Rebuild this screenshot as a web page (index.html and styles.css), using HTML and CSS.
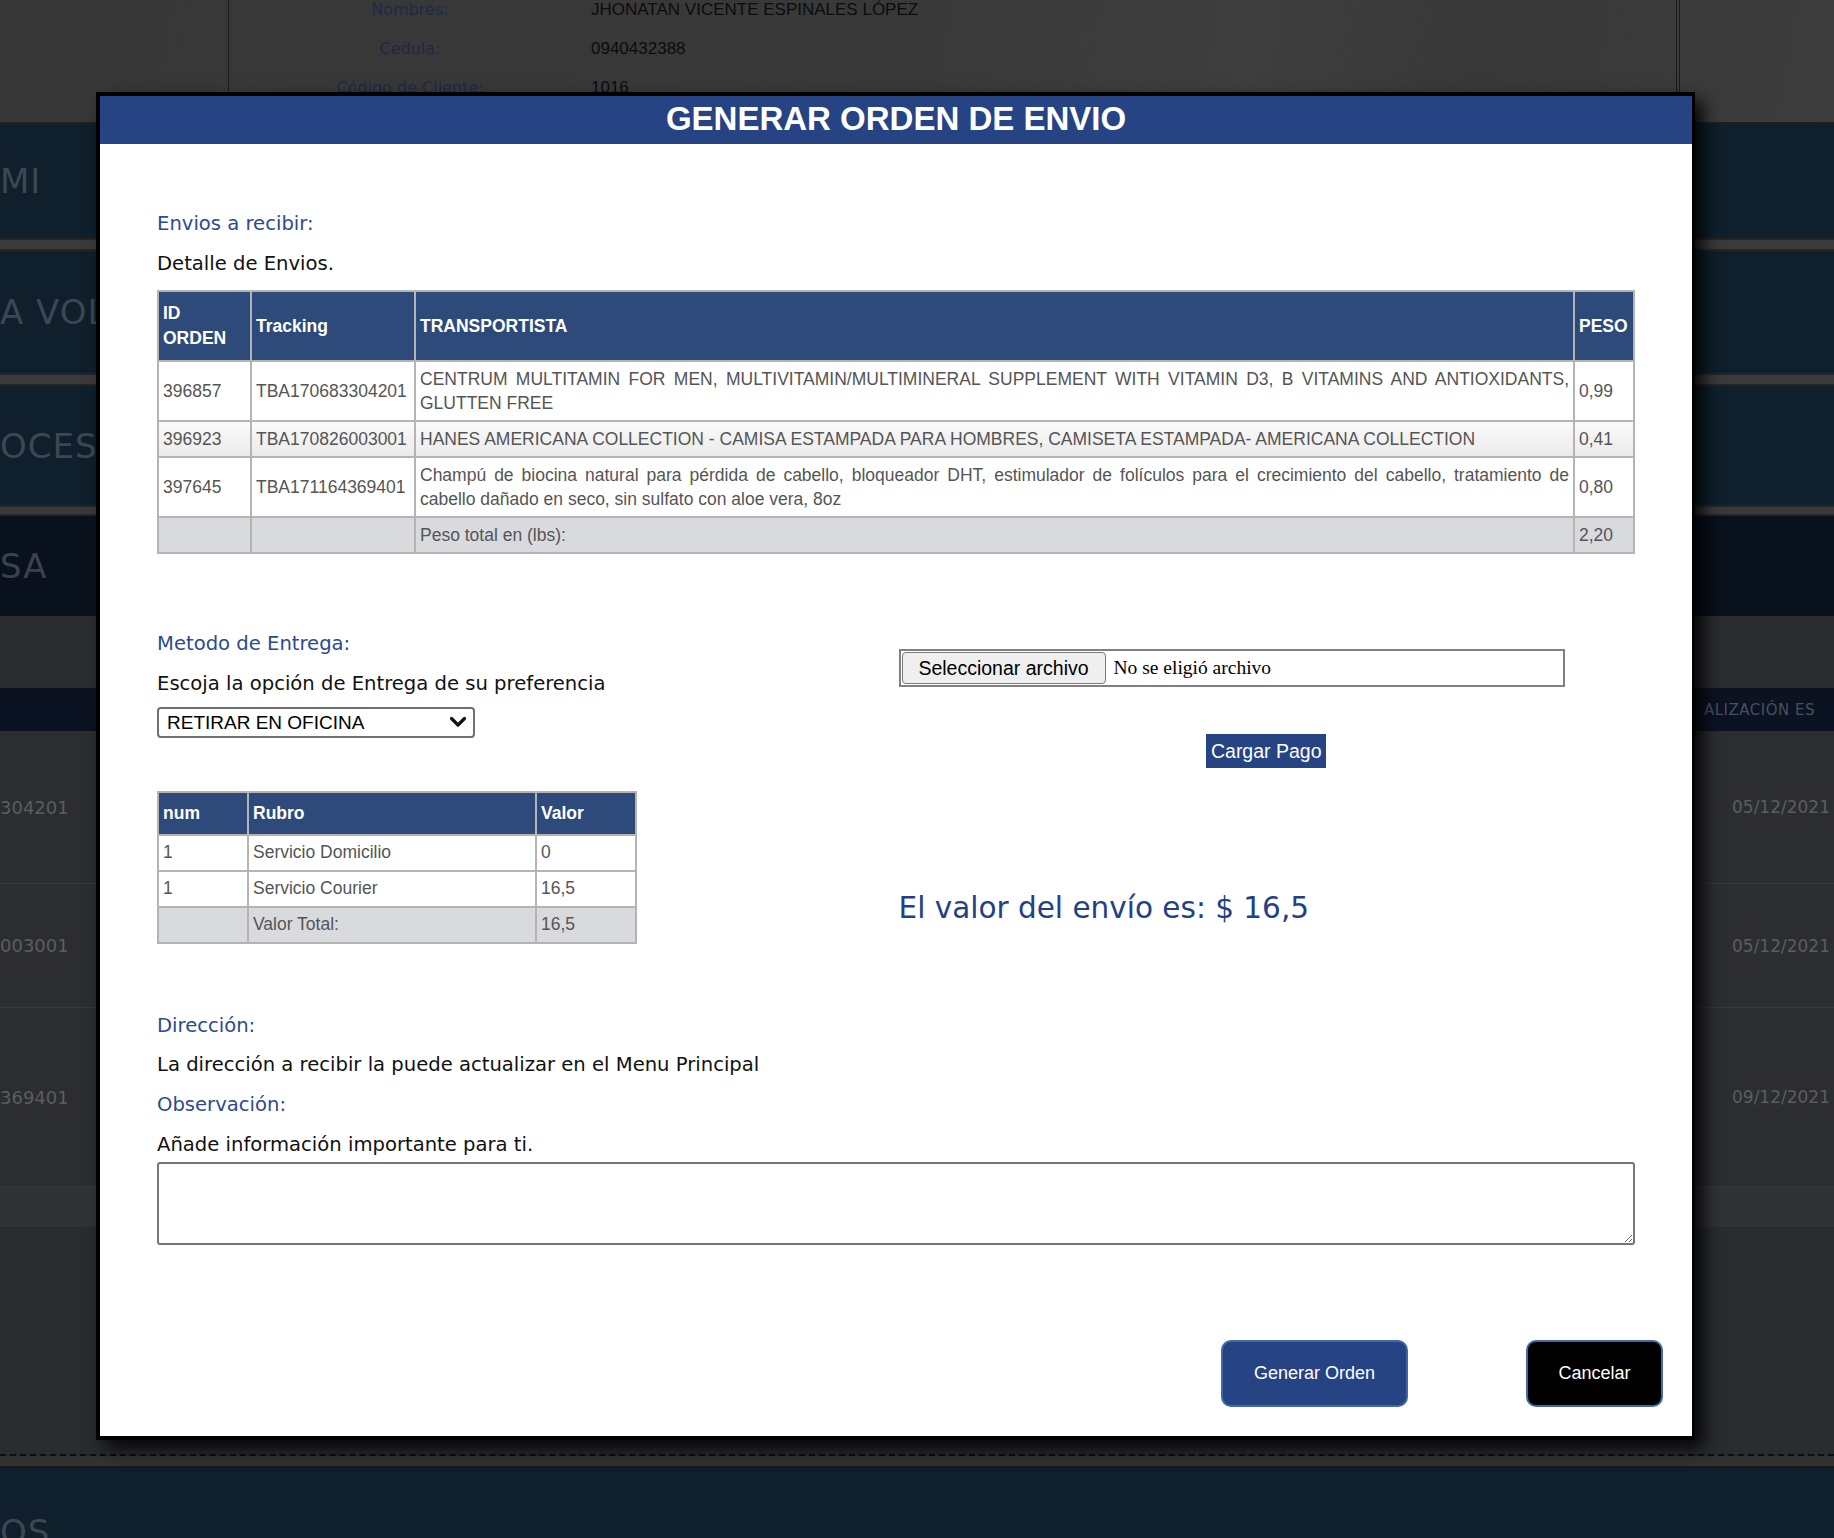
FILE: index.html
```html
<!DOCTYPE html>
<html lang="es">
<head>
<meta charset="utf-8">
<title>Generar Orden de Envio</title>
<link rel="stylesheet" href="styles.css">
</head>
<body>
<div class="page">
  <section class="profile">
    <div class="profile-box">
      <div class="profile-rows">
        <div class="profile-row"><span class="p-label">Nombres:</span><span class="p-value">JHONATAN VICENTE ESPINALES LÓPEZ</span></div>
        <div class="profile-row"><span class="p-label">Cedula:</span><span class="p-value">0940432388</span></div>
        <div class="profile-row"><span class="p-label">Código de Cliente:</span><span class="p-value">1016</span></div>
      </div>
    </div>
  </section>
  <div class="band b1"><span class="band-text">MI</span></div>
  <div class="band-sep"></div>
  <div class="band b2"><span class="band-text">A VOLA</span></div>
  <div class="band-sep"></div>
  <div class="band b3"><span class="band-text">OCESO</span></div>
  <div class="band-sep thin"></div>
  <div class="band b4"><span class="band-text t4">SA</span></div>
  <div class="bg-spacer"></div>
  <div class="bg-thead"><span class="bg-th">ALIZACIÓN ES</span></div>
  <div class="bg-row r1"><span class="bg-cell">304201</span><span class="bg-date">05/12/2021</span></div>
  <div class="bg-row r2"><span class="bg-cell">003001</span><span class="bg-date">05/12/2021</span></div>
  <div class="bg-row r3"><span class="bg-cell">369401</span><span class="bg-date">09/12/2021</span></div>
  <div class="bg-foot"></div>
  <div class="bg-fill"></div>
  <div class="bg-gap"></div>
  <div class="bg-footer"><span class="band-text">OS</span></div>
</div>

<div class="modal">
  <div class="modal-head">GENERAR ORDEN DE ENVIO</div>
  <div class="modal-body">
    <p class="label">Envios a recibir:</p>
    <p class="text gap16">Detalle de Envios.</p>
    <table class="grid ship">
      <colgroup><col class="c-id"><col class="c-track"><col><col class="c-peso"></colgroup>
      <thead>
        <tr><th>ID ORDEN</th><th>Tracking</th><th>TRANSPORTISTA</th><th>PESO</th></tr>
      </thead>
      <tbody>
        <tr><td>396857</td><td>TBA170683304201</td><td class="desc">CENTRUM MULTITAMIN FOR MEN, MULTIVITAMIN/MULTIMINERAL SUPPLEMENT WITH VITAMIN D3, B VITAMINS AND ANTIOXIDANTS, GLUTTEN FREE</td><td>0,99</td></tr>
        <tr class="alt"><td>396923</td><td>TBA170826003001</td><td class="desc">HANES AMERICANA COLLECTION - CAMISA ESTAMPADA PARA HOMBRES, CAMISETA ESTAMPADA- AMERICANA COLLECTION</td><td>0,41</td></tr>
        <tr><td>397645</td><td>TBA171164369401</td><td class="desc">Champú de biocina natural para pérdida de cabello, bloqueador DHT, estimulador de folículos para el crecimiento del cabello, tratamiento de cabello dañado en seco, sin sulfato con aloe vera, 8oz</td><td>0,80</td></tr>
        <tr class="sum"><td></td><td></td><td>Peso total en (lbs):</td><td>2,20</td></tr>
      </tbody>
    </table>

    <div class="two-col">
      <div class="col-left">
        <p class="label">Metodo de Entrega:</p>
        <p class="text gap16">Escoja la opción de Entrega de su preferencia</p>
        <div class="select-wrap">
          <select class="select"><option>RETIRAR EN OFICINA</option></select>
          <svg class="chev" width="18" height="14" viewBox="0 0 18 14" aria-hidden="true"><path d="M2.5 3.5 L9 10 L15.5 3.5" fill="none" stroke="#111" stroke-width="3.2" stroke-linecap="round" stroke-linejoin="round"/></svg>
        </div>
        <table class="grid cost">
          <colgroup><col class="c-num"><col class="c-rubro"><col></colgroup>
          <thead><tr><th>num</th><th>Rubro</th><th>Valor</th></tr></thead>
          <tbody>
            <tr><td>1</td><td>Servicio Domicilio</td><td>0</td></tr>
            <tr><td>1</td><td>Servicio Courier</td><td>16,5</td></tr>
            <tr class="sum"><td></td><td>Valor Total:</td><td>16,5</td></tr>
          </tbody>
        </table>
      </div>
      <div class="col-right">
        <div class="file">
          <span class="file-btn">Seleccionar archivo</span>
          <span class="file-name">No se eligió archivo</span>
        </div>
        <div class="upload-row"><button class="upload" type="button">Cargar Pago</button></div>
        <p class="total">El valor del envío es: $ 16,5</p>
      </div>
    </div>

    <p class="label gap70">Dirección:</p>
    <p class="text gap15">La dirección a recibir la puede actualizar en el Menu Principal</p>
    <p class="label gap16">Observación:</p>
    <p class="text gap16">Añade información importante para ti.</p>
    <textarea class="obs"></textarea>

    <div class="actions">
      <button class="btn primary" type="button">Generar Orden</button>
      <button class="btn dark" type="button">Cancelar</button>
    </div>
  </div>
</div>
</body>
</html>
```

FILE: styles.css
```css
* { box-sizing: border-box; }
html, body { margin: 0; padding: 0; }
body {
  width: 1834px;
  height: 1538px;
  overflow: hidden;
  background: #2a2b2f;
  font-family: "Liberation Sans", Arial, sans-serif;
  position: relative;
}

/* ---------- background page (dimmed) ---------- */
.page { display: flex; flex-direction: column; }

.profile {
  height: 124px;
  background: linear-gradient(100deg, #373737 0%, #393939 50%, #3e3e3e 68%, #383838 80%, #3c3c3c 100%);
  border-bottom: 2px solid #1f1f1f;
  padding-left: 228px;
  overflow: hidden;
}
.profile-box {
  width: 1452px;
  height: 100%;
  border-left: 1px solid #1b1b1b;
  border-right: 4px double #1b1b1b;
}
.profile-rows { margin-top: -10px; display: flex; flex-direction: column; }
.profile-row {
  display: grid;
  grid-template-columns: 362px 1fr;
  height: 39px;
  align-items: center;
}
.p-label {
  text-align: center;
  font-family: "DejaVu Sans", sans-serif;
  font-size: 16px;
  color: #1e2947;
}
.p-value { font-size: 17px; color: #0c0c0c; }

.band {
  display: flex;
  align-items: center;
  background: #0f1f2b;
  overflow: hidden;
  white-space: nowrap;
}
.b1 { height: 114px; }
.b2 { height: 122px; }
.b3 { height: 119px; }
.b4 { height: 100px; background: #09111c; }
.band-sep {
  height: 13px;
  background: #3a3a3b;
  border-top: 2px solid #262626;
  border-bottom: 2px solid #262626;
}
.band-sep.thin { height: 11px; }
.band-text {
  font-family: "DejaVu Sans", sans-serif;
  font-size: 34px;
  letter-spacing: 1px;
  color: #3d4753;
}
.t4 { color: #39424e; }

.bg-spacer { height: 72px; background: #2b2c30; }
.bg-thead {
  height: 43px;
  background: #0b1322;
  display: flex;
  align-items: center;
  padding-left: 1704px;
  overflow: hidden;
  white-space: nowrap;
}
.bg-th {
  font-family: "DejaVu Sans", sans-serif;
  font-size: 15px;
  letter-spacing: 0.5px;
  color: #46505e;
}
.bg-row {
  display: grid;
  grid-template-columns: 1732px 102px;
  align-items: center;
  background: #2c2d30;
  border-bottom: 1px solid #38393c;
  overflow: hidden;
  white-space: nowrap;
}
.r1 { height: 153px; }
.r2 { height: 124px; }
.r3 { height: 179px; }
.bg-cell, .bg-date {
  font-family: "DejaVu Sans", sans-serif;
  font-size: 18px;
  color: #5a5d63;
}
.bg-date { font-size: 17px; }
.bg-foot { height: 40px; background: #313236; }
.bg-fill { height: 229px; background: #2a2b2f; border-bottom: 2px dashed #0d0d0d; }
.bg-gap { height: 12px; background: #323233; border-bottom: 2px solid #151a1f; }
.bg-footer {
  height: 120px;
  background: #0f1f2b;
  padding-top: 44px;
  overflow: hidden;
  white-space: nowrap;
}

/* ---------- modal ---------- */
.modal {
  position: absolute;
  left: 96px;
  top: 92px;
  width: 1599px;
  height: 1348px;
  background: #fff;
  border: 4px solid #000;
  border-right-width: 3px;
  box-shadow: 9px 9px 16px rgba(0, 0, 0, 0.85);
  display: flex;
  flex-direction: column;
}
.modal-head {
  height: 48px;
  background: #264384;
  color: #fff;
  font-weight: bold;
  font-size: 33px;
  line-height: 46px;
  text-align: center;
}
.modal-body {
  padding: 68px 56px 0 57px;
  display: flex;
  flex-direction: column;
}

.label, .text {
  margin: 0;
  font-family: "DejaVu Sans", sans-serif;
  font-size: 19.6px;
  line-height: 24px;
}
.label { color: #2c4b8f; }
.text { color: #111; }
.gap15 { margin-top: 15px; }
.gap16 { margin-top: 16px; }
.gap70 { margin-top: 70px; }

/* tables */
.grid {
  border-collapse: collapse;
  table-layout: fixed;
  font-size: 17.5px;
  line-height: 24px;
  color: #555;
}
.grid th, .grid td {
  border: 2px solid #b4b4b4;
  padding: 5px 4px;
  text-align: left;
  vertical-align: middle;
}
.grid th {
  background: #2e4a7b;
  color: #fff;
  font-weight: bold;
  line-height: 25px;
}
.grid tr.alt td { background: linear-gradient(#fafafa, #ebebeb); }
.grid tr.sum td { background: #d9dadd; }

.ship { width: 1478px; margin-top: 14px; }
.ship th { padding-top: 9px; padding-bottom: 9px; }
.c-id { width: 93px; }
.c-track { width: 164px; }
.c-peso { width: 60px; }
.desc { text-align: justify !important; }

.cost { width: 480px; margin-top: 53px; }
.cost th { padding-top: 8px; padding-bottom: 8px; }
.cost td { padding-top: 4px; padding-bottom: 5px; line-height: 25px; }
.c-num { width: 90px; }
.c-rubro { width: 288px; }

.two-col {
  margin-top: 78px;
  display: grid;
  grid-template-columns: 1fr 1fr;
}
.col-left { display: flex; flex-direction: column; align-items: flex-start; }

.select-wrap {
  position: relative;
  margin-top: 11px;
  width: 318px;
  height: 31px;
}
.select {
  appearance: none;
  -webkit-appearance: none;
  width: 100%;
  height: 100%;
  border: 2px solid #707070;
  border-radius: 4px;
  background: #fff;
  padding: 0 0 0 8px;
  font-family: "Liberation Sans", Arial, sans-serif;
  font-size: 19px;
  color: #000;
}
.chev {
  position: absolute;
  right: 8px;
  top: 8px;
  pointer-events: none;
}

.col-right {
  padding-top: 17px;
  padding-left: 2px;
  display: flex;
  flex-direction: column;
}
.file {
  width: 666px;
  height: 38px;
  border: 2px solid #808080;
  display: flex;
  align-items: center;
  padding-left: 1px;
}
.file-btn {
  width: 204px;
  height: 32px;
  background: #efefef;
  border: 1px solid #7a7a7a;
  border-radius: 4px;
  font-size: 19.5px;
  color: #000;
  display: flex;
  align-items: center;
  justify-content: center;
}
.file-name {
  margin-left: 8px;
  font-family: "Liberation Serif", "Times New Roman", serif;
  font-size: 19.5px;
  color: #000;
}
.upload-row {
  margin-top: 47px;
  display: flex;
  justify-content: center;
  padding-right: 2px;
}
.upload {
  width: 120px;
  height: 34px;
  border: none;
  background: #264384;
  color: #fff;
  font-family: "Liberation Sans", Arial, sans-serif;
  font-size: 19.5px;
  padding: 0;
}
.total {
  margin: 122px 0 0 0;
  font-family: "DejaVu Sans", sans-serif;
  font-size: 29.5px;
  line-height: 36px;
  color: #233f85;
}

.obs {
  display: block;
  margin-top: 5px;
  width: 1478px;
  height: 83px;
  border: 2px solid #767676;
  border-radius: 3px;
  resize: both;
}

.actions {
  margin-top: 95px;
  margin-right: -27px;
  display: flex;
  justify-content: flex-end;
  gap: 118px;
}
.btn {
  height: 67px;
  border: 2px solid #3f6aa3;
  border-radius: 10px;
  color: #fff;
  font-family: "Liberation Sans", Arial, sans-serif;
  font-size: 18px;
  padding: 0;
}
.btn.primary { width: 187px; background: #264384; }
.btn.dark { width: 137px; background: #000; }
```
